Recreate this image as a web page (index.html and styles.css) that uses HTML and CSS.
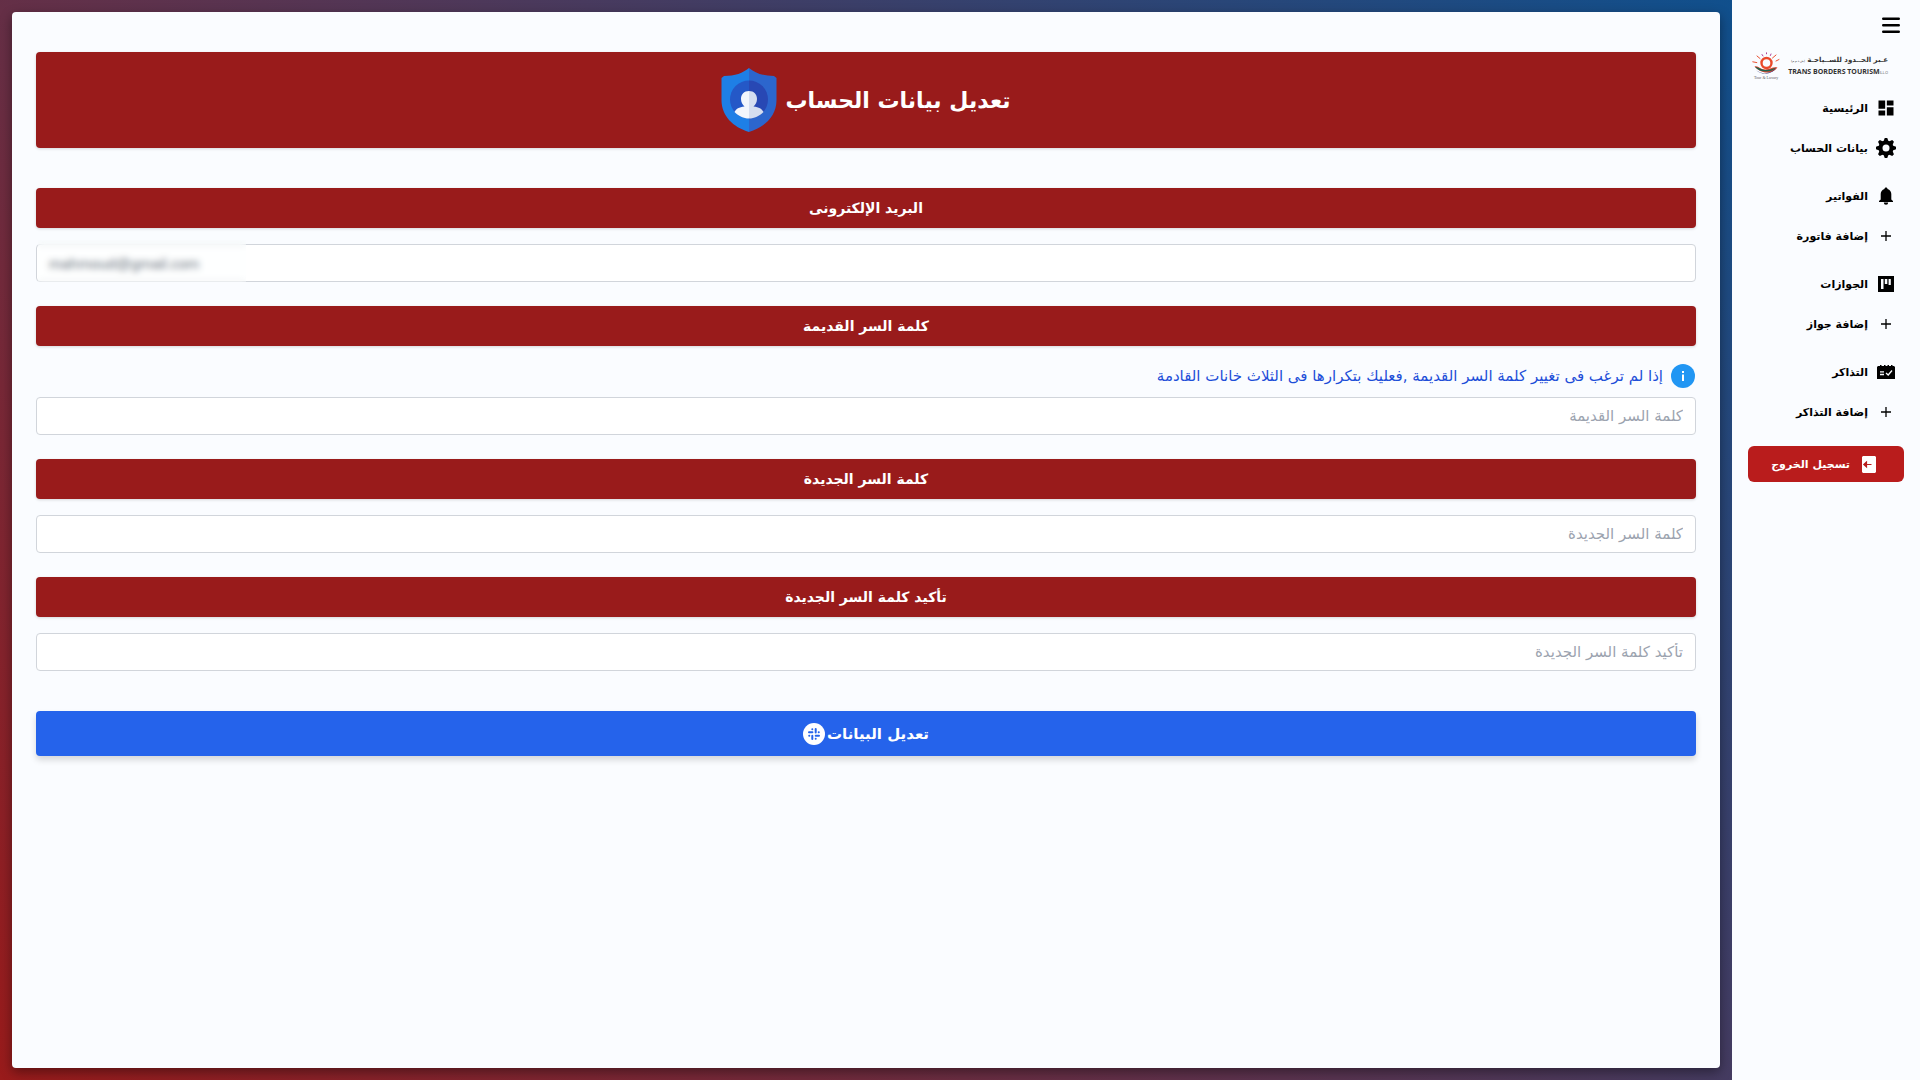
FILE: index.html
```html
<!DOCTYPE html>
<html lang="ar" dir="rtl">
<head>
<meta charset="utf-8">
<meta name="viewport" content="width=device-width, initial-scale=1">
<title>تعديل بيانات الحساب</title>
<link rel="stylesheet" href="styles.css">
</head>
<body>
<div class="app">
  <aside class="sidebar">
    <button class="menu-toggle" type="button" aria-label="القائمة">
      <svg width="18" height="18" viewBox="0 0 18 18" stroke="currentColor" stroke-width="2.400" stroke-linecap="round"><path d="M1.200 2.700h15.600M1.200 9.200h15.600M1.200 15.700h15.600"/></svg>
    </button>
    <a class="brand" href="#">
      <span class="brand-text">
        <span class="brand-ar">عـبر الحــدود للســياحـة <small>(ش.ذ.م.م)</small></span>
        <span class="brand-en" dir="ltr">TRANS BORDERS TOURISM<small>(L.L.C)</small></span>
      </span>
      <span class="brand-mark">
        <svg width="28" height="23" viewBox="0 0 28 23" fill="none" stroke-linecap="round">
          <circle cx="14.500" cy="11" r="5" stroke="#ea4a2b" stroke-width="2.400"/>
          <path d="M.8 9.800l4 .8M5 4l3 2.500M20.500 6l3.500-3M24 9l3-1.500" stroke="#ea5030" stroke-width="1"/>
          <path d="M10 2.500l1 1.500M14.500.8v1M19 2l-.6 1.500" stroke="#b0409a" stroke-width="1"/>
          <path d="M2.500 14c4 0 6 3.500 11 3.500 5 0 7-3 12-2-3 4-7 5-11 5S5 18 2.500 14z" fill="#e2452d"/>
          <path d="M3 15c4 0 5 2.500 10 3 5 0 8-1.500 11-2.500-3 3-6 4-10 4-5 0-8-1.500-11-4.500z" fill="#20644f"/>
          <path d="M4 18c4 4 14 5 20-2-3 6-14 8-20 2z" fill="#303b78"/>
        </svg>
        <small dir="ltr">Tour &amp; Luxury</small>
      </span>
    </a>
    <nav class="nav">
      <ul class="nav-group">
        <li><a href="#"><span class="icon"><svg width="20" height="20" viewBox="0 0 24 24" fill="currentColor"><path d="M3 13h8V3H3v10zm0 8h8v-6H3v6zm10 0h8V11h-8v10zm0-18v6h8V3h-8z"/></svg></span>الرئيسية</a></li>
        <li><a href="#"><span class="icon"><svg width="20" height="20" viewBox="0 0 24 24"><g fill="currentColor"><circle cx="12" cy="12" r="9"/><path d="M9 4L10.500 0h3L15 4v16l-1.500 4h-3L9 20z"/><path d="M9 4L10.500 0h3L15 4v16l-1.500 4h-3L9 20z" transform="rotate(45 12 12)"/><path d="M9 4L10.500 0h3L15 4v16l-1.500 4h-3L9 20z" transform="rotate(90 12 12)"/><path d="M9 4L10.500 0h3L15 4v16l-1.500 4h-3L9 20z" transform="rotate(135 12 12)"/></g><circle cx="12" cy="12" r="4.200" fill="#fafcff"/></svg></span>بيانات الحساب</a></li>
      </ul>
      <ul class="nav-group">
        <li><a href="#"><span class="icon"><svg width="18" height="18" viewBox="0 0 18 18" fill="currentColor"><path d="M9 .5c.9 0 1.500.6 1.500 1.400C13 2.600 14.300 4.600 14.300 7v5.500l1.700 1.500v1H2v-1l1.700-1.500V7c0-2.400 1.300-4.400 3.800-5.100C7.500 1.100 8.100.5 9 .5zM6.800 15.500h4.400a2.200 2.200 0 0 1-4.400 0z"/></svg></span>الفواتير</a></li>
        <li><a href="#"><span class="icon"><svg width="10" height="10" viewBox="0 0 10 10" stroke="currentColor" stroke-width="1.300"><path d="M5 0v10M0 5h10"/></svg></span>إضافة فاتورة</a></li>
      </ul>
      <ul class="nav-group">
        <li><a href="#"><span class="icon"><svg width="16" height="16" viewBox="0 0 16 16"><path fill="currentColor" d="M0 0h16v16H0z"/><path d="M3 3h2.500v10H3zM6.800 3h2.500v5H6.800zM10.600 3h2.200v6h-2.200z" fill="#fafcff"/></svg></span>الجوازات</a></li>
        <li><a href="#"><span class="icon"><svg width="10" height="10" viewBox="0 0 10 10" stroke="currentColor" stroke-width="1.300"><path d="M5 0v10M0 5h10"/></svg></span>إضافة جواز</a></li>
      </ul>
      <ul class="nav-group">
        <li><a href="#"><span class="icon"><svg width="18" height="14" viewBox="0 0 18 14"><path fill="currentColor" d="M1 1h2V0h1.500v1H7V0h1.500v1h2V0H12v1h2V0h1.500v1H17l1 1v12H0V2z"/><path d="M3 6.800h4M3 9.500h4M9 8l2.200 2L15 5.500" fill="none" stroke="#fafcff" stroke-width="1.300"/></svg></span>التذاكر</a></li>
        <li><a href="#"><span class="icon"><svg width="10" height="10" viewBox="0 0 10 10" stroke="currentColor" stroke-width="1.300"><path d="M5 0v10M0 5h10"/></svg></span>إضافة التذاكر</a></li>
      </ul>
    </nav>
    <button class="logout" type="button">
      <svg width="14" height="17" viewBox="0 0 14 17"><path fill="#fff" d="M1 0h12l1 1v15l-1 1H1l-1-1V1z"/><path d="M9.500 8.500H2M4.500 6L1.800 8.500 4.500 11z" fill="#b91c1c" stroke="#b91c1c" stroke-width="1.200"/></svg>
      <span>تسجيل الخروج</span>
    </button>
  </aside>

  <div class="stage">
    <main class="panel">
      <h1 class="title">
        <span>تعديل بيانات الحساب</span>
        <svg width="56" height="64" viewBox="0 0 56 64">
          <path d="M28 0C22 5 14 8 3 8L.5 10v22C.5 48 12 59 28 64z" fill="#1e7fe6"/>
          <path d="M28 0c6 5 14 8 25 8l2.500 2v22c0 16-11.500 27-27.500 32z" fill="#2c66cd"/>
          <path d="M28 12.500a19 19 0 0 0 0 38z" fill="#2458c7"/>
          <path d="M28 12.500a19 19 0 0 1 0 38z" fill="#2848b4"/>
          <path d="M28 23c-5 0-8 3.500-8 8 0 3 1.500 6 3.500 7.500C18 39 15 41 13.500 44c4 4 9 6.500 14.500 6.500z" fill="#f2f6fc"/>
          <path d="M28 23c5 0 8 3.500 8 8 0 3-1.500 6-3.500 7.500 5.500.5 8.500 2.500 10 5.500-4 4-9 6.500-14.500 6.500z" fill="#d5def0"/>
        </svg>
      </h1>
      <form class="form">
        <div class="field">
          <label for="email">البريد الإلكترونى</label>
          <div class="masked">
            <input id="email" class="email" type="email" dir="ltr" value="mahmoud@gmail.com">
            <span class="mask"></span>
          </div>
        </div>
        <div class="field">
          <label for="old">كلمة السر القديمة</label>
          <p class="hint">
            <svg width="24" height="24" viewBox="0 0 24 24"><circle cx="12" cy="12" r="12" fill="#2196f3"/><path d="M11 10.500h2V17h-2zM11 7h2v2h-2z" fill="#fff"/></svg>
            <span>إذا لم ترغب فى تغيير كلمة السر القديمة ,فعليك بتكرارها فى الثلاث خانات القادمة</span>
          </p>
          <input id="old" type="password" placeholder="كلمة السر القديمة">
        </div>
        <div class="field">
          <label for="new">كلمة السر الجديدة</label>
          <input id="new" type="password" placeholder="كلمة السر الجديدة">
        </div>
        <div class="field">
          <label for="confirm">تأكيد كلمة السر الجديدة</label>
          <input id="confirm" type="password" placeholder="تأكيد كلمة السر الجديدة">
        </div>
        <button class="submit" type="submit">
          <span>تعديل البيانات</span>
          <svg width="22" height="22" viewBox="0 0 22 22" fill="none"><circle cx="11" cy="11" r="11" fill="#fff"/><path d="M6 9.300h3.400M12.700 6v3.400M12.700 12.700H16M9.300 12.700V16M9.300 6.200v.1M15.700 9.300h.1M12.700 15.700v.1M6.200 12.700h.1" stroke="#2563eb" stroke-width="2" stroke-linecap="round"/></svg>
        </button>
      </form>
    </main>
  </div>
</div>
</body>
</html>
```
FILE: styles.css
```css
* { box-sizing: border-box; }

body {
  margin: 0;
  font-family: "DejaVu Sans", sans-serif;
  color: #000;
}

button, input { font-family: inherit; }

.app {
  display: flex;
  min-height: 100vh;
  background: linear-gradient(45deg, #991b1b, #075394);
}

/* Sidebar */
.sidebar {
  flex: 0 0 188px;
  padding: 16px;
  background: #fafcff;
}

.menu-toggle {
  display: block;
  height: 18px;
  margin: 0 4px 16px;
  padding: 0;
  border: 0;
  background: none;
  color: #000;
}

.brand {
  display: flex;
  align-items: center;
  gap: 8px;
  height: 32px;
  margin-bottom: 6px;
  padding-right: 16px;
  color: #333;
  text-decoration: none;
  white-space: nowrap;
}

.brand-text {
  display: flex;
  flex-direction: column;
  gap: 1px;
  line-height: 10px;
}

.brand-text small { font-size: 3px; font-weight: 400; }
.brand-ar { font-size: 7px; font-weight: 700; }

.brand-en {
  font-family: "Open Sans", sans-serif;
  font-size: 7px;
  font-weight: 700;
}

.brand-mark {
  display: flex;
  flex-direction: column;
  align-items: center;
}

.brand-mark small {
  color: #666;
  font-family: "Liberation Serif", serif;
  font-size: 4px;
  line-height: 5px;
}

.nav {
  display: flex;
  flex-direction: column;
  gap: 8px;
}

.nav-group {
  margin: 0;
  padding: 0;
  list-style: none;
}

.nav a {
  display: flex;
  align-items: center;
  gap: 8px;
  height: 40px;
  padding-right: 8px;
  color: #000;
  font-size: 11px;
  font-weight: 700;
  text-decoration: none;
}

.icon {
  display: flex;
  justify-content: center;
  width: 20px;
}

.logout {
  display: flex;
  align-items: center;
  gap: 12px;
  width: 100%;
  height: 36px;
  margin-top: 14px;
  padding: 0 28px 0 0;
  border: 0;
  border-radius: 6px;
  background: #b91c1c;
  color: #fff;
  font-size: 11px;
  font-weight: 700;
  white-space: nowrap;
}

/* Content */
.stage {
  display: flex;
  flex: 1;
  padding: 12px;
}

.panel {
  flex: 1;
  padding: 40px 24px;
  border-radius: 4px;
  background: #fafcff;
  box-shadow: 0 4px 12px rgba(0, 0, 0, .4);
}

.title {
  display: flex;
  align-items: center;
  justify-content: center;
  gap: 8px;
  height: 96px;
  margin: 0 0 40px;
  border-radius: 4px;
  background: #991b1b;
  box-shadow: 0 1px 3px rgba(0, 0, 0, .15);
  color: #fff;
  font-size: 22px;
}

.form, .field {
  display: flex;
  flex-direction: column;
}

.form { gap: 24px; }
.field { gap: 16px; }

.field label {
  height: 40px;
  border-radius: 4px;
  background: #991b1b;
  box-shadow: 0 1px 3px rgba(0, 0, 0, .15);
  color: #fff;
  font-size: 14px;
  font-weight: 700;
  line-height: 40px;
  text-align: center;
}

.field input {
  display: block;
  width: 100%;
  height: 38px;
  padding: 0 12px;
  border: 1px solid #d1d5db;
  border-radius: 4px;
  background: #fff;
  color: #4b5563;
  font-size: 15px;
}

.field input::placeholder { color: #9ca3af; opacity: 1; }

.hint {
  display: flex;
  align-items: center;
  gap: 8px;
  height: 27px;
  margin: 0 1px -8px;
  color: #1d4ed8;
  font-size: 15px;
}

.masked { position: relative; }

.field .email { font-family: "Liberation Sans", sans-serif; }

/* Frosted cover that hides the account address */
.mask {
  position: absolute;
  top: -4px;
  bottom: 0;
  left: 2px;
  width: 208px;
  background: rgba(252, 253, 255, .2);
  backdrop-filter: blur(3px);
}

.submit {
  display: flex;
  align-items: center;
  justify-content: center;
  gap: 2px;
  height: 45px;
  margin-top: 16px;
  border: 0;
  border-radius: 4px;
  background: #2563eb;
  box-shadow: 0 4px 6px rgba(0, 0, 0, .15);
  color: #fff;
  font-size: 15px;
  font-weight: 700;
}
```
